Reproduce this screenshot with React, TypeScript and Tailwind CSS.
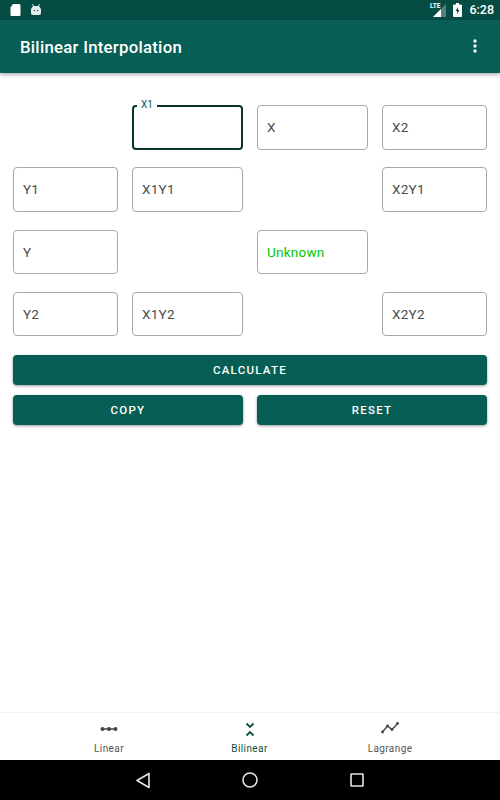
const boxClass = 'h-[44.5px] flex items-center rounded border border-[#a8a8a8] bg-white pl-[9px] pr-[10px] text-[13.5px] tracking-[0.25px]';

function Field({ label, green }: { label: string; green?: boolean }) {
  return <div className={boxClass + (green ? ' text-[#00c800]' : ' text-[#4a4a4a]')}>{label}</div>;
}

function ActionButton({ label }: { label: string }) {
  return (
    <button className="h-[30px] flex-1 rounded bg-[#075e54] pt-[1px] text-[11.5px] font-medium tracking-[1.25px] text-white shadow-[0_1px_3px_rgba(0,0,0,0.4)]">
      {label}
    </button>
  );
}

function NavItem({ label, active, children }: { label: string; active?: boolean; children: React.ReactNode }) {
  return (
    <div className={'flex w-[112px] flex-col items-center ' + (active ? 'text-[#0b4f45]' : 'text-[#555]')}>
      <div className="flex h-[24px] items-center">{children}</div>
      <span className="text-[10px] tracking-[0.4px]">{label}</span>
    </div>
  );
}

export default function App() {
  return (
    <div className="flex h-[800px] w-[500px] flex-col bg-white font-['Roboto',sans-serif]">
      {/* Status bar */}
      <div className="flex h-[20px] items-center justify-between bg-[#054c44] pl-[10px] pr-[6px]">
        <div className="flex items-center gap-[9px]">
          <svg width="11" height="12" viewBox="0 0 11 12"><path d="M3 0h6a1.500 1.500 0 0 1 1.500 1.500V11a1 1 0 0 1-1 1h-8a1 1 0 0 1-1-1V3.500z" fill="#fff" /></svg>
          <svg width="12" height="12" viewBox="0 0 12 12"><path d="M2.500 0 4 2h4l1.500-2 .5.400L9 2.500A4 4 0 0 1 11 5.500V9a2 2 0 0 1-2 2H3a2 2 0 0 1-2-2V5.500A4 4 0 0 1 3 2.500L2 .400z" fill="#e4eeec" /><circle cx="4.300" cy="6.500" r=".7" fill="#054c44" /><circle cx="7.700" cy="6.500" r=".7" fill="#054c44" /></svg>
        </div>
        <div className="flex items-center gap-[7px]">
          <div className="relative h-[14px] w-[15px]">
            <svg width="15" height="14" viewBox="0 0 15 14"><path d="M15 1v13H2z" fill="#fff" fillOpacity=".3" /><path d="M10 6v8H2z" fill="#fff" /></svg>
            <span className="absolute left-[-1.500px] top-[-1px] text-[6.500px] font-bold leading-[8px] text-white">LTE</span>
          </div>
          <svg width="9" height="14" viewBox="0 0 9 14"><path d="M3 0h3v1.500h2a1 1 0 0 1 1 1V13a1 1 0 0 1-1 1H1a1 1 0 0 1-1-1V2.500a1 1 0 0 1 1-1h2z" fill="#fff" /><path d="M5 4 2.500 8H4v3l2.500-4H5z" fill="#054c44" /></svg>
          <span className="text-[12.500px] font-medium text-white">6:28</span>
        </div>
      </div>

      {/* App bar */}
      <div className="z-10 flex h-[53px] items-center justify-between bg-[#075e54] pl-[20px] pr-[23px] shadow-[0_2px_4px_rgba(0,0,0,0.3)]">
        <span className="pt-[3px] text-[16.800px] font-medium tracking-[0.25px] text-white">Bilinear Interpolation</span>
        <svg width="4" height="14" viewBox="0 0 4 14" fill="#fff" className="mt-[-1px]">
          <circle cx="2" cy="2" r="1.700" />
          <circle cx="2" cy="7" r="1.700" />
          <circle cx="2" cy="12" r="1.700" />
        </svg>
      </div>

      {/* Form */}
      <div className="flex flex-1 flex-col px-[13px] pt-[32px]">
        <div className="grid grid-cols-[105px_111px_111px_105px] gap-x-[14px] gap-y-[17.8px]">
          <div />
          <div className="relative h-[44.5px] rounded border-2 border-[#06352e]">
            <span className="absolute left-[3px] top-[-8px] bg-white px-[4px] text-[10px] leading-[12px] text-[#075e54]">X1</span>
          </div>
          <Field label="X" />
          <Field label="X2" />

          <Field label="Y1" />
          <Field label="X1Y1" />
          <div />
          <Field label="X2Y1" />

          <Field label="Y" />
          <div />
          <Field label="Unknown" green />
          <div />

          <Field label="Y2" />
          <Field label="X1Y2" />
          <div />
          <Field label="X2Y2" />
        </div>

        <div className="mt-[19px] flex">
          <ActionButton label="CALCULATE" />
        </div>
        <div className="mt-[10px] flex gap-[14px]">
          <ActionButton label="COPY" />
          <ActionButton label="RESET" />
        </div>
      </div>

      {/* Bottom nav */}
      <div className="flex h-[48px] justify-center border-t border-[#f2f2f2] bg-white pt-[4px]">
        <div className="ml-[-1px] flex gap-[28.5px]">
          <NavItem label="Linear">
            <svg width="18" height="6" viewBox="0 0 18 6" className="text-[#444]"><path d="M1 3h16" stroke="currentColor" strokeWidth="1.500" /><circle cx="2.500" cy="3" r="2" fill="currentColor" /><circle cx="9" cy="3" r="2" fill="currentColor" /><circle cx="15.500" cy="3" r="2" fill="currentColor" /></svg>
          </NavItem>
          <NavItem label="Bilinear" active>
            <svg width="10" height="15" viewBox="0 0 10 15" fill="none" stroke="currentColor" strokeWidth="1.800"><path d="M1.500 1.500 5 5l3.500-3.500M1.500 13.500 5 10l3.500 3.500" /></svg>
          </NavItem>
          <NavItem label="Lagrange">
            <svg width="18" height="12" viewBox="0 0 18 12" fill="none" stroke="#444" strokeWidth="1.300" className="mt-[-3px]">
              <path d="M1.500 10 6.500 4l4.500 3.500 5.500-6" />
              <circle cx="1.500" cy="10" r="1.400" fill="#444" stroke="none" />
              <circle cx="6.500" cy="4" r="1.400" fill="#444" stroke="none" />
              <circle cx="11" cy="7.500" r="1.400" fill="#444" stroke="none" />
              <circle cx="16.500" cy="1.500" r="1.400" fill="#444" stroke="none" />
            </svg>
          </NavItem>
        </div>
      </div>

      {/* Navigation bar */}
      <div className="flex h-[40px] items-center justify-center gap-[91px] bg-black pr-[1px]">
        <svg width="16" height="17" viewBox="0 0 16 17" fill="none" stroke="#e6e6e6" strokeWidth="1.600"><path d="M14 1.500v14L2 8.500z" strokeLinejoin="round" /></svg>
        <svg width="16" height="16" viewBox="0 0 16 16" fill="none" stroke="#e6e6e6" strokeWidth="1.600"><circle cx="8" cy="8" r="7" /></svg>
        <svg width="14" height="14" viewBox="0 0 14 14" fill="none" stroke="#e6e6e6" strokeWidth="1.600" className="ml-[1px]"><rect x="1" y="1" width="12" height="12" rx="0.500" /></svg>
      </div>
    </div>
  );
}
